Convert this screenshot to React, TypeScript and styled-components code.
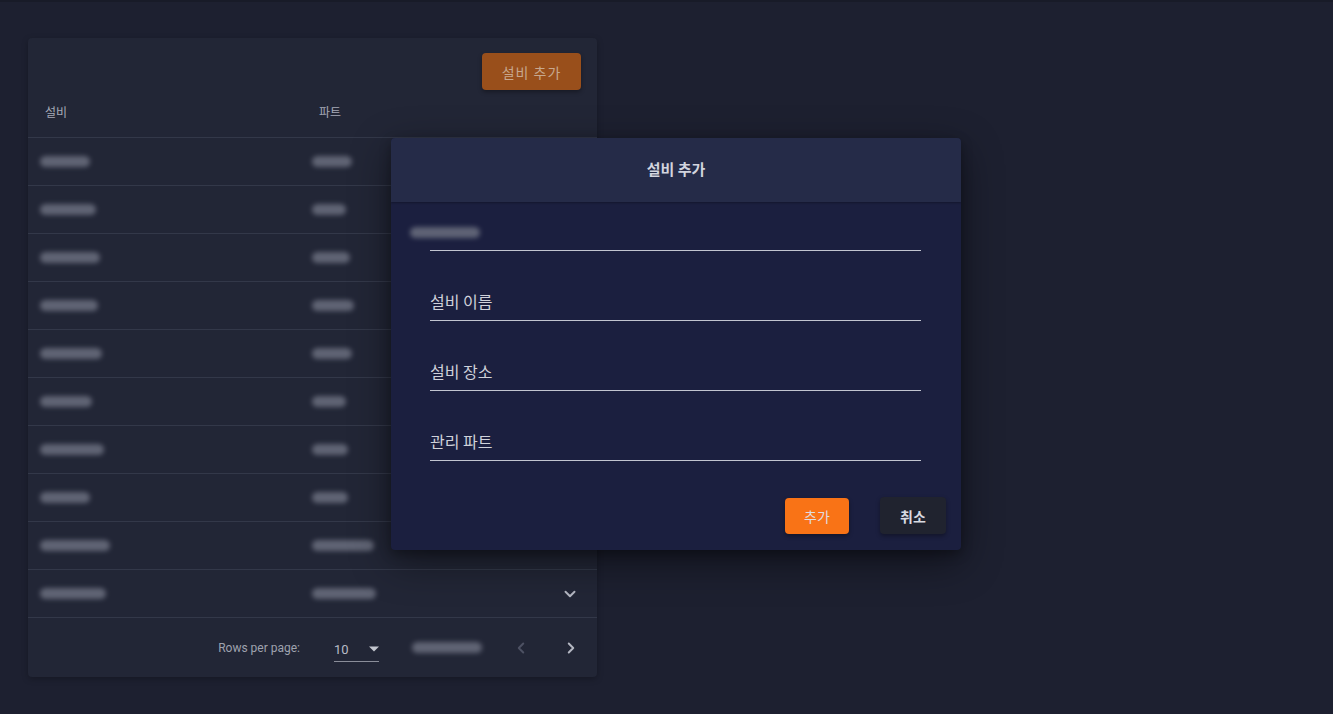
import styled, { createGlobalStyle } from 'styled-components';

const GlobalStyle = createGlobalStyle`
  html, body {
    margin: 0;
    padding: 0;
    background: #1d2030;
    font-family: 'Noto Sans CJK KR', 'Noto Sans', sans-serif;
  }
  * { box-sizing: border-box; }
`;

const Page = styled.div`
  position: relative;
  width: 1333px;
  height: 714px;
  padding: 38px 0 0 28px;
  box-shadow: inset 0 2px 0 #181b28;
  overflow: hidden;
`;

const Card = styled.div`
  width: 569px;
  height: 639px;
  background: #222636;
  border-radius: 4px;
  display: flex;
  flex-direction: column;
  box-shadow: 0 2px 6px rgba(0, 0, 0, 0.25);
`;

const Toolbar = styled.div`
  display: flex;
  justify-content: flex-end;
  padding: 15px 16px 0 0;
`;

const OrangeButton = styled.button<{ $muted?: boolean }>`
  border: none;
  border-radius: 4px;
  font-family: 'Noto Sans CJK KR', sans-serif;
  cursor: pointer;
  background: ${({ $muted }) => ($muted ? '#994f1b' : '#f97316')};
  color: ${({ $muted }) => ($muted ? '#c7a88e' : '#e8e4e6')};
  box-shadow: 0 2px 4px rgba(0, 0, 0, 0.35);
`;

const TopAddButton = styled(OrangeButton)`
  width: 99px;
  height: 37px;
  font-size: 14px;
  letter-spacing: 1px;
`;

const HeadRow = styled.div`
  display: grid;
  grid-template-columns: 274px 1fr;
  height: 48px;
  align-items: end;
  padding: 0 0 17px 17px;
  border-bottom: 1px solid #333849;
  font-size: 12px;
  color: #a6a9b6;
`;

const Row = styled.div`
  display: grid;
  grid-template-columns: 272px 1fr 40px;
  align-items: center;
  height: 48px;
  padding: 0 7px 0 12px;
  border-bottom: 1px solid #333849;
`;

const Blur = styled.span<{ $w: number }>`
  display: inline-block;
  width: ${({ $w }) => $w}px;
  height: 11px;
  border-radius: 6px;
  background: #6b6f7f;
  filter: blur(2.5px);
  opacity: 0.85;
`;

const RowIcon = styled.div`
  display: flex;
  justify-content: center;
  color: #b4b7c2;
`;

const Footer = styled.div`
  flex: 1;
  display: flex;
  align-items: center;
  justify-content: flex-end;
  padding-right: 17px;
  font-family: Roboto, 'Liberation Sans', sans-serif;
  font-size: 12px;
  color: #9fa2ae;
`;

const PerPage = styled.div`
  display: flex;
  align-items: center;
  justify-content: space-between;
  width: 45px;
  height: 28px;
  margin: 0 33px 0 34px;
  border-bottom: 1px solid #8a8d99;
  color: #b9bcc6;
  font-size: 13px;
  padding-top: 4px;
`;

const NavIcon = styled.span<{ $dim?: boolean; $gap: number }>`
  display: flex;
  margin-left: ${({ $gap }) => $gap}px;
  color: ${({ $dim }) => ($dim ? '#4d5163' : '#b4b7c2')};
`;

const Dialog = styled.div`
  position: absolute;
  left: 391px;
  top: 138px;
  width: 570px;
  height: 412px;
  border-radius: 4px;
  overflow: hidden;
  background: #1b1f3f;
  box-shadow: 0 12px 40px rgba(0, 0, 0, 0.45), 0 4px 12px rgba(0, 0, 0, 0.3);
  display: flex;
  flex-direction: column;
`;

const DialogHeader = styled.div`
  height: 64px;
  background: #252b48;
  display: flex;
  align-items: center;
  justify-content: center;
  padding-bottom: 3px;
  font-size: 15px;
  font-weight: 700;
  color: #d2d4de;
  box-shadow: 0 1px 2px rgba(0, 0, 0, 0.3);
`;

const DialogBody = styled.div`
  display: flex;
  flex-direction: column;
  gap: 22px;
  padding: 0 40px 0 39px;
`;

const Field = styled.div`
  height: 48px;
  display: flex;
  align-items: flex-end;
  padding-bottom: 7px;
  border-bottom: 1px solid #c2c5d0;
  font-size: 16px;
  color: #cfd1da;
`;

const FirstField = styled(Field)`
  height: 49px;
  margin-left: -20px;
  padding-left: 0;
  border-bottom: none;
  position: relative;
  &::after {
    content: '';
    position: absolute;
    left: 20px;
    right: 0;
    bottom: 0;
    height: 1px;
    background: #c2c5d0;
  }
  padding-bottom: 13px;
`;

const DialogActions = styled.div`
  display: flex;
  justify-content: flex-end;
  align-items: center;
  gap: 31px;
  padding: 36px 15px 0 0;
`;

const AddButton = styled(OrangeButton)`
  width: 64px;
  height: 36px;
  font-size: 14px;
  color: #e0dde0;
`;

const CancelButton = styled.button`
  width: 66px;
  height: 37px;
  border: none;
  border-radius: 4px;
  background: #20232f;
  color: #d8dae2;
  font-family: 'Noto Sans CJK KR', sans-serif;
  font-size: 14px;
  font-weight: 700;
  box-shadow: 0 2px 4px rgba(0, 0, 0, 0.35);
`;

const rows = [
  [50, 40],
  [56, 34],
  [60, 38],
  [58, 42],
  [62, 40],
  [52, 34],
  [64, 36],
  [50, 36],
  [70, 62],
  [66, 64],
];

const Chevron = ({ d, size = 18 }: { d: string; size?: number }) => (
  <svg width={size} height={size} viewBox="0 0 24 24" fill="none" stroke="currentColor" strokeWidth={2.6} strokeLinecap="round" strokeLinejoin="round">
    <path d={d} />
  </svg>
);

export default function App() {
  return (
    <>
      <GlobalStyle />
      <Page>
        <Card>
          <Toolbar>
            <TopAddButton $muted>설비 추가</TopAddButton>
          </Toolbar>
          <HeadRow>
            <span>설비</span>
            <span>파트</span>
          </HeadRow>
          {rows.map(([a, b], i) => (
            <Row key={i}>
              <Blur $w={a} />
              <Blur $w={b} />
              <RowIcon>{i === rows.length - 1 && <Chevron d="M6 9l6 6 6-6" />}</RowIcon>
            </Row>
          ))}
          <Footer>
            <span>Rows per page:</span>
            <PerPage>
              <span>10</span>
              <svg width="10" height="6" viewBox="0 0 10 5">
                <path d="M0 0h10L5 5z" fill="#c3c6cf" />
              </svg>
            </PerPage>
            <Blur $w={70} />
            <NavIcon $dim $gap={30}>
              <Chevron d="M15 6l-6 6 6 6" />
            </NavIcon>
            <NavIcon $gap={32}>
              <Chevron d="M9 6l6 6-6 6" />
            </NavIcon>
          </Footer>
        </Card>

        <Dialog>
          <DialogHeader>설비 추가</DialogHeader>
          <DialogBody>
            <FirstField>
              <Blur $w={70} />
            </FirstField>
            <Field>설비 이름</Field>
            <Field>설비 장소</Field>
            <Field>관리 파트</Field>
          </DialogBody>
          <DialogActions>
            <AddButton>추가</AddButton>
            <CancelButton>취소</CancelButton>
          </DialogActions>
        </Dialog>
      </Page>
    </>
  );
}
